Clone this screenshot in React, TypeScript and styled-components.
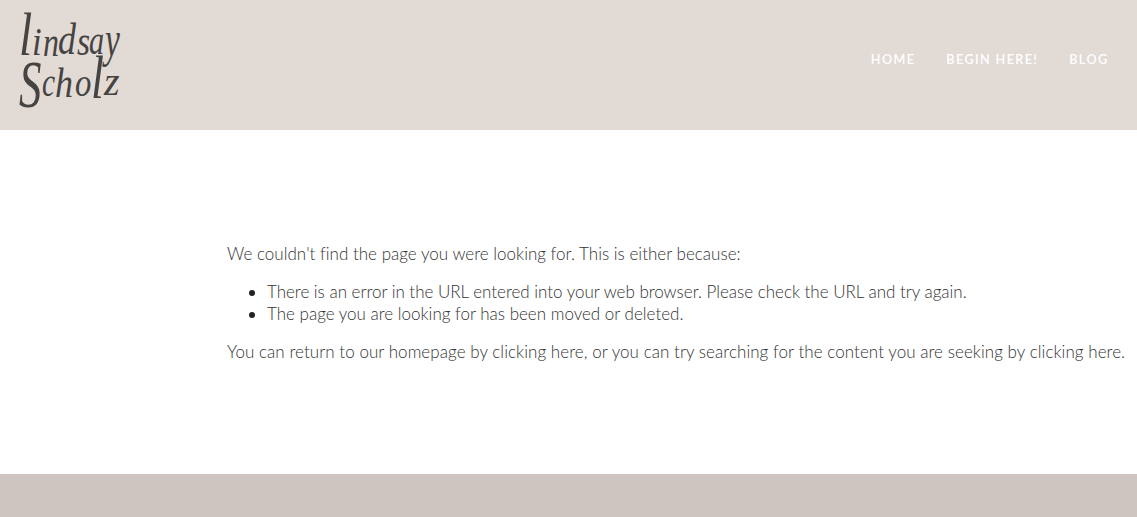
import React from "react";
import styled, { createGlobalStyle } from "styled-components";

const GlobalStyle = createGlobalStyle`
  body {
    margin: 0;
    background: #fff;
    overflow: hidden;
  }
`;

const Page = styled.div`
  display: flex;
  flex-direction: column;
  height: 517px;
  font-family: Lato, sans-serif;
`;

const Header = styled.header`
  display: flex;
  justify-content: space-between;
  height: 130px;
  background: #e2dad5;
`;

const LogoLink = styled.a`
  display: block;
  width: 140px;
  height: 130px;
`;

const LogoLetter = styled.text`
  font-family: "Liberation Serif", serif;
  font-style: italic;
  fill: #454442;
`;

const Nav = styled.nav`
  display: flex;
  gap: 31px;
  padding: 50px 28.5px 0 0;
`;

const NavLink = styled.a`
  color: #fff;
  font-size: 12.6px;
  font-weight: 600;
  line-height: 20px;
  letter-spacing: 1.4px;
  text-decoration: none;
  white-space: nowrap;
`;

const Main = styled.main`
  flex: 1;
  padding: 113px 0 0 227px;
  color: #222;
  font-size: 17px;
  font-weight: 300;
  line-height: 22px;
  white-space: nowrap;
`;

const Paragraph = styled.p<{ $spacing?: number }>`
  margin: 0 0 16px;
  letter-spacing: ${({ $spacing = 0 }) => $spacing}px;
`;

const List = styled.ul`
  margin: 0 0 16px;
  padding-left: 40px;
`;

const Text = styled.span<{ $spacing?: number }>`
  color: #333;
  letter-spacing: ${({ $spacing = 0 }) => $spacing}px;
`;

const Footer = styled.footer`
  height: 43px;
  background: #cec5c0;
`;

interface Letter {
  char: string;
  x: number;
  y: number;
  size: number;
  stretch: number;
}

const firstName: Letter[] = [
  { char: "l", x: 19, y: 55, size: 61, stretch: 0.78 },
  { char: "i", x: 32, y: 55, size: 41, stretch: 0.85 },
  { char: "n", x: 43, y: 56, size: 42, stretch: 0.76 },
  { char: "d", x: 58, y: 54, size: 45, stretch: 0.8 },
  { char: "s", x: 77, y: 55, size: 42, stretch: 0.8 },
  { char: "a", x: 89, y: 54, size: 42, stretch: 0.72 },
  { char: "y", x: 105, y: 56, size: 50, stretch: 0.67 },
];

const lastName: Letter[] = [
  { char: "S", x: 19, y: 107, size: 67, stretch: 0.67 },
  { char: "c", x: 42, y: 96, size: 41, stretch: 0.72 },
  { char: "h", x: 55, y: 97, size: 43, stretch: 0.84 },
  { char: "o", x: 75, y: 96, size: 39, stretch: 0.84 },
  { char: "l", x: 91, y: 98, size: 62, stretch: 0.75 },
  { char: "z", x: 104, y: 95, size: 40, stretch: 1 },
];

function LogoWord({ letters }: { letters: Letter[] }) {
  return (
    <g>
      {letters.map(({ char, x, y, size, stretch }, i) => (
        <LogoLetter
          key={i}
          fontSize={size}
          transform={`translate(${x} ${y}) scale(${stretch} 1)`}
        >
          {char}
        </LogoLetter>
      ))}
    </g>
  );
}

export default function App() {
  return (
    <Page>
      <GlobalStyle />
      <Header>
        <LogoLink>
          <svg width="140" height="130" viewBox="0 0 140 130">
            <LogoWord letters={firstName} />
            <LogoWord letters={lastName} />
          </svg>
        </LogoLink>
        <Nav>
          <NavLink>HOME</NavLink>
          <NavLink>BEGIN HERE!</NavLink>
          <NavLink>BLOG</NavLink>
        </Nav>
      </Header>
      <Main>
        <Paragraph $spacing={0.015}>
          <Text $spacing={0.015}>
            We couldn't find the page you were looking for. This is either because:
          </Text>
        </Paragraph>
        <List>
          <li>
            <Text $spacing={-0.015}>
              There is an error in the URL entered into your web browser. Please check the URL and try again.
            </Text>
          </li>
          <li>
            <Text>The page you are looking for has been moved or deleted.</Text>
          </li>
        </List>
        <Paragraph>
          <Text $spacing={0.055}>
            You can return to our homepage by clicking here, or you can try searching for the content you are seeking by clicking here.
          </Text>
        </Paragraph>
      </Main>
      <Footer />
    </Page>
  );
}
